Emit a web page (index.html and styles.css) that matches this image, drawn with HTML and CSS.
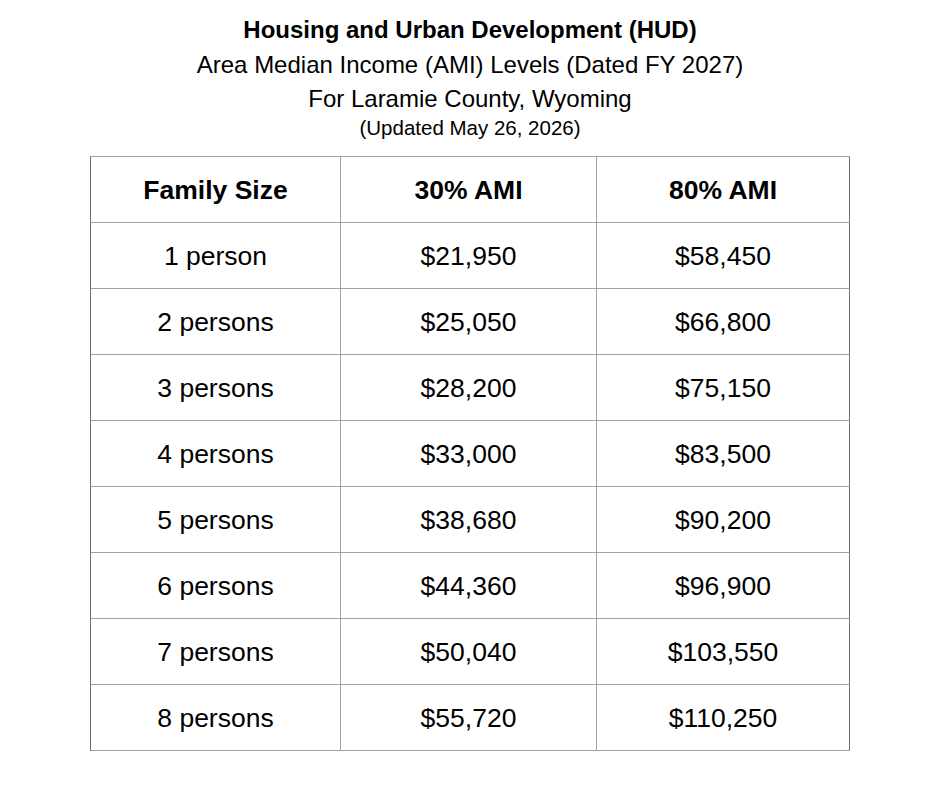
FILE: index.html
```html
<!DOCTYPE html>
<html lang="en">
<head>
<meta charset="utf-8">
<title>HUD Area Median Income Levels</title>
<link rel="stylesheet" href="styles.css">
</head>
<body>
<div class="page">
  <header class="heading">
    <div class="line title">Housing and Urban Development (HUD)</div>
    <div class="line second">Area Median Income (AMI) Levels (Dated FY 2027)</div>
    <div class="line third">For Laramie County, Wyoming</div>
    <div class="line small">(Updated May 26, 2026)</div>
  </header>
  <div class="table">
    <div class="cell head">Family Size</div>
    <div class="cell head">30% AMI</div>
    <div class="cell head">80% AMI</div>

    <div class="cell">1 person</div><div class="cell">$21,950</div><div class="cell">$58,450</div>
    <div class="cell">2 persons</div><div class="cell">$25,050</div><div class="cell">$66,800</div>
    <div class="cell">3 persons</div><div class="cell">$28,200</div><div class="cell">$75,150</div>
    <div class="cell">4 persons</div><div class="cell">$33,000</div><div class="cell">$83,500</div>
    <div class="cell">5 persons</div><div class="cell">$38,680</div><div class="cell">$90,200</div>
    <div class="cell">6 persons</div><div class="cell">$44,360</div><div class="cell">$96,900</div>
    <div class="cell">7 persons</div><div class="cell">$50,040</div><div class="cell">$103,550</div>
    <div class="cell">8 persons</div><div class="cell">$55,720</div><div class="cell">$110,250</div>
  </div>
</div>
</body>
</html>
```
FILE: styles.css
```css
html, body {
  margin: 0;
  padding: 0;
  background: #ffffff;
}
body {
  font-family: "Liberation Sans", Arial, sans-serif;
  color: #000000;
}
.page {
  width: 940px;
  height: 788px;
  display: flex;
  flex-direction: column;
  align-items: center;
}
.heading {
  padding-top: 12px;
  display: flex;
  flex-direction: column;
  align-items: center;
}
.line {
  font-size: 24px;
  line-height: 34px;
  white-space: nowrap;
}
.title {
  font-weight: bold;
  line-height: 36px;
}
.second {
  line-height: 33px;
}
.third {
  line-height: 35px;
}
.small {
  font-size: 20.5px;
  line-height: 24px;
}
.table {
  margin-top: 16px;
  display: grid;
  grid-template-columns: 250px 256px 253px;
  grid-auto-rows: 66px;
  border-top: 1px solid #a2a2a2;
  border-left: 1px solid #6e6e6e;
}
.cell {
  box-sizing: border-box;
  padding-top: 2px;
  border-right: 1px solid #a2a2a2;
  border-bottom: 1px solid #a2a2a2;
  display: flex;
  align-items: center;
  justify-content: center;
  font-size: 26.5px;
  white-space: nowrap;
}
.cell:nth-child(3n) {
  border-right-color: #6e6e6e;
}
.head {
  font-weight: bold;
}
```
